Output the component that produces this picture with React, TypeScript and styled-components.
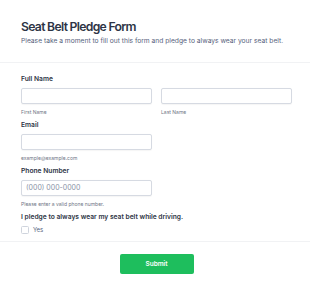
import React from "react";
import styled, { createGlobalStyle } from "styled-components";

const Global = createGlobalStyle`
  html, body { margin: 0; padding: 0; background: #ffffff; }
  body { font-family: Inter, "Noto Sans", sans-serif; }
  * { box-sizing: border-box; }
`;

const Page = styled.div`
  width: 310px;
  background: #ffffff;
`;

const Header = styled.header`
  padding: 18.5px 18px 16px 21px;
  border-bottom: 1px solid #f1f2f4;
`;

const Title = styled.h1`
  margin: 0;
  font-family: Inter, "Noto Sans", sans-serif;
  font-size: 12.2px;
  letter-spacing: -0.7px;
  line-height: 15px;
  font-weight: 600;
  color: #2d3445;
`;

const Subtitle = styled.p`
  margin: 3px 0 0;
  font-size: 6.7px;
  line-height: 9px;
  color: #56627c;
`;

const Body = styled.section`
  padding: 11px 18px 7px 21px;
  border-bottom: 1px solid #f1f2f4;
  display: flex;
  flex-direction: column;
  gap: 4px;
`;

const Field = styled.div`
  display: flex;
  flex-direction: column;
`;

const Label = styled.div`
  font-size: 6.7px;
  line-height: 10px;
  font-weight: 600;
  color: #2d3445;
  margin-bottom: 4px;
`;

const Row = styled.div`
  display: grid;
  grid-template-columns: 131px 131px;
  column-gap: 9px;
`;

const Col = styled.div`
  display: flex;
  flex-direction: column;
`;

const Input = styled.input<{ $w?: number }>`
  width: ${(p) => (p.$w ? `${p.$w}px` : "100%")};
  height: 16px;
  border: 1px solid #d6dae2;
  border-radius: 2px;
  background: #fff;
  padding: 0 4px;
  font-family: inherit;
  font-size: 7px;
  color: #2d3445;
  outline: none;
  box-shadow: 0 0.5px 1px rgba(0, 0, 0, 0.04);
  &::placeholder { color: #8a93a6; }
`;

const Sub = styled.div`
  margin-top: 4px;
  font-size: 5px;
  line-height: 8px;
  color: #6f7686;
`;

const CheckRow = styled.label`
  display: flex;
  align-items: center;
  gap: 4px;
  font-size: 6px;
  line-height: 8px;
  color: #56627c;
`;

const Box = styled.span`
  width: 8px;
  height: 8px;
  border: 1px solid #cfd4dd;
  border-radius: 1.5px;
  background: #fff;
`;

const Footer = styled.div`
  display: flex;
  justify-content: center;
  padding: 12px 18px 0 21px;
`;

const Button = styled.button`
  width: 74px;
  height: 20px;
  border: none;
  border-radius: 2px;
  background: #1ebe5d;
  color: #ffffff;
  font-family: inherit;
  font-size: 6.5px;
  font-weight: 600;
`;

export default function App() {
  return (
    <Page>
      <Global />
      <Header>
        <Title>Seat Belt Pledge Form</Title>
        <Subtitle>
          Please take a moment to fill out this form and pledge to always wear your seat belt.
        </Subtitle>
      </Header>
      <Body>
        <Field>
          <Label>Full Name</Label>
          <Row>
            <Col>
              <Input />
              <Sub>First Name</Sub>
            </Col>
            <Col>
              <Input />
              <Sub>Last Name</Sub>
            </Col>
          </Row>
        </Field>
        <Field>
          <Label>Email</Label>
          <Input $w={131} />
          <Sub>example@example.com</Sub>
        </Field>
        <Field>
          <Label>Phone Number</Label>
          <Input $w={131} placeholder="(000) 000-0000" />
          <Sub>Please enter a valid phone number.</Sub>
        </Field>
        <Field>
          <Label>I pledge to always wear my seat belt while driving.</Label>
          <CheckRow>
            <Box />
            Yes
          </CheckRow>
        </Field>
      </Body>
      <Footer>
        <Button>Submit</Button>
      </Footer>
    </Page>
  );
}
